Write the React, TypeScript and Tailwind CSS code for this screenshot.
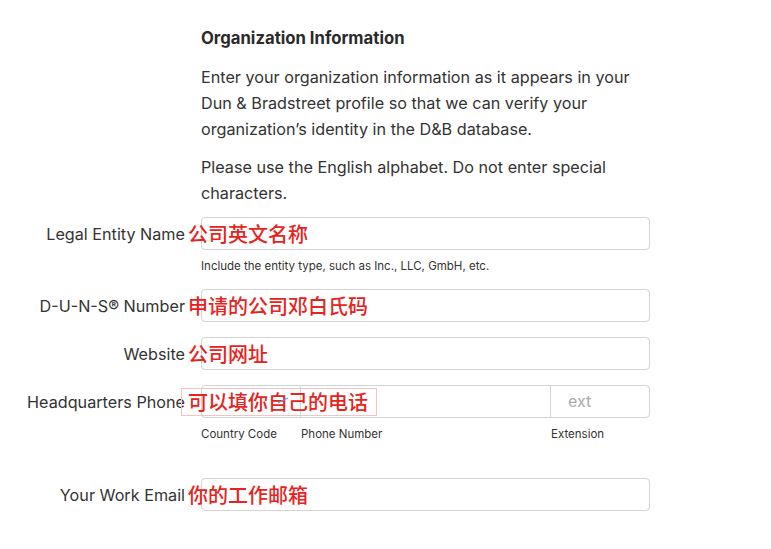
const font = "font-['Inter','Noto_Sans_CJK_SC',sans-serif]";

function Note({ text }: { text: string }) {
  return (
    <span className="absolute top-1/2 -translate-y-1/2 left-[-13px] whitespace-nowrap text-[20px] leading-[26px] font-medium text-[#e6231c] font-['Noto_Sans_CJK_SC',sans-serif]">
      {text}
    </span>
  );
}

function Row({
  label,
  note,
  children,
  className = "",
}: {
  label: string;
  note?: string;
  children?: React.ReactNode;
  className?: string;
}) {
  return (
    <div className={`flex items-center ${className}`}>
      <div className="w-[185px] shrink-0 pt-[2px] text-right text-[16.2px] text-[#333]">{label}</div>
      <div className="relative ml-[16px] w-[449px]">
        {children ?? <div className="h-[33px] rounded-[4px] border border-[#d4d4d4] bg-white" />}
        {note && <Note text={note} />}
      </div>
    </div>
  );
}

export default function App() {
  return (
    <div className={`min-h-screen w-[771px] bg-white text-[#333] ${font}`}>
      <div className="pl-[201px] pt-[26px] w-[655px]">
        <h2 className="text-[16.7px] leading-[24px] font-bold text-[#2b2b2b]">Organization Information</h2>
        <p className="mt-[14px] text-[16.2px] leading-[26px]">
          Enter your organization information as it appears in your Dun &amp; Bradstreet profile so that we can verify
          your organization’s identity in the D&amp;B database.
        </p>
        <p className="mt-[12px] text-[16.2px] leading-[26px]">
          Please use the English alphabet. Do not enter special characters.
        </p>
      </div>

      <Row label="Legal Entity Name" note="公司英文名称" className="mt-[11px]" />
      <div className="ml-[201px] mt-[8px] text-[11.5px] leading-[16px] text-[#333]">
        Include the entity type, such as Inc., LLC, GmbH, etc.
      </div>

      <Row label="D-U-N-S® Number" note="申请的公司邓白氏码" className="mt-[15px]" />
      <Row label="Website" note="公司网址" className="mt-[15px]" />

      <div className="mt-[15px] flex items-center">
        <div className="w-[185px] shrink-0 pt-[2px] text-right text-[16.2px] text-[#333]">Headquarters Phone</div>
        <div className="relative ml-[16px] w-[449px]">
          <div className="flex h-[33px] rounded-[4px] border border-[#d4d4d4] bg-white">
            <div className="w-[99px] border-r border-[#d4d4d4]" />
            <div className="w-[250px] border-r border-[#d4d4d4]" />
            <div className="flex-1 pl-[17px] text-[16px] leading-[31px] text-[#ababab]">ext</div>
          </div>
          <span className="absolute top-1/2 -translate-y-1/2 left-[-19px] whitespace-nowrap pl-[6px] pr-[8px] text-[20px] leading-[26px] font-medium text-[#e6231c] outline outline-1 outline-[#f6c2c2] font-['Noto_Sans_CJK_SC',sans-serif]">
            可以填你自己的电话
          </span>
          <svg className="absolute left-[76px] top-[12px]" width="12" height="7" viewBox="0 0 12 7">
            <path d="M1 6 L11 1" stroke="#5aa0d8" strokeWidth="1.2" />
          </svg>
        </div>
      </div>
      <div className="ml-[201px] mt-[8px] flex w-[449px] text-[11.5px] leading-[16px] text-[#333]">
        <div className="w-[100px]">Country Code</div>
        <div className="w-[250px]">Phone Number</div>
        <div>Extension</div>
      </div>

      <Row label="Your Work Email" note="你的工作邮箱" className="mt-[36px]" />
    </div>
  );
}
